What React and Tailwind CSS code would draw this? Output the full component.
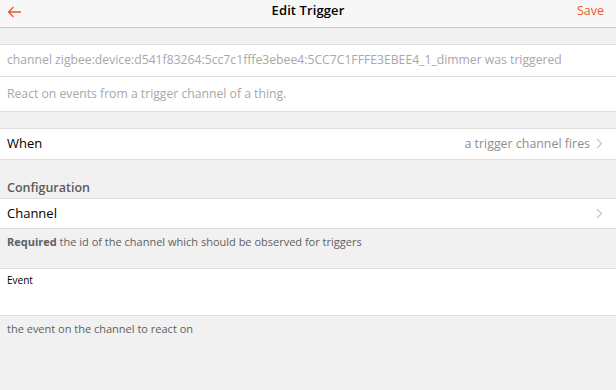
import React from "react";

const Chevron = () => (
  <svg width="7" height="11" viewBox="0 0 7 11" className="ml-[6px]">
    <path d="M1 1l4.5 4.5L1 10" fill="none" stroke="#c7c7cc" strokeWidth="1.2" />
  </svg>
);

export default function App() {
  return (
    <div
      className="w-[616px] h-[390px] bg-[#f1f1f1] overflow-hidden text-[#1f1f1f]"
      style={{ fontFamily: '"Open Sans", "Noto Sans", sans-serif' }}
    >
      <div className="h-[28px] bg-[#f7f7f7] border-b border-[#c6c6c6] grid grid-cols-[1fr_auto_1fr] items-center px-[7px]">
        <svg width="15" height="12" viewBox="0 0 15 12" className="-mt-[3px]">
          <path d="M14 6H1.5M6.5 1L1.5 6l5 5" fill="none" stroke="#ec5a2a" strokeWidth="1.3" />
        </svg>
        <div className="text-[13px] font-semibold text-black -mt-[5px] tracking-[0.1px]">Edit Trigger</div>
        <div className="text-[12.5px] text-[#ec5a2a] -mt-[5px] pr-[5px] text-right">Save</div>
      </div>
      <div className="h-[16px]" />
      <div className="bg-white border-y border-[#dddddd]">
        <div className="h-[32px] flex items-center px-[7px] text-[12.2px] text-[#a8a8a8] border-b border-[#dddddd] whitespace-nowrap">
          channel zigbee:device:d541f83264:5cc7c1fffe3ebee4:5CC7C1FFFE3EBEE4_1_dimmer was triggered
        </div>
        <div className="h-[34px] flex items-center px-[7px] text-[12.2px] text-[#a8a8a8]">
          React on events from a trigger channel of a thing.
        </div>
      </div>
      <div className="h-[16px]" />
      <div className="h-[32px] bg-white border-y border-[#dddddd] flex items-center justify-between px-[7px] pr-[13px]">
        <div className="text-[13px] text-black">When</div>
        <div className="flex items-center text-[12.4px] text-[#8e8e8e]">
          a trigger channel fires
          <Chevron />
        </div>
      </div>
      <div className="h-[38px] flex items-end px-[7px] pb-[0px]">
        <div className="text-[12.5px] font-semibold text-[#5a5a5a]">Configuration</div>
      </div>
      <div className="h-[31px] bg-white border-y border-[#dddddd] flex items-center justify-between px-[7px] pr-[13px]">
        <div className="text-[13px] text-black">Channel</div>
        <Chevron />
      </div>
      <div className="h-[39px] pt-[5px] px-[7px] text-[11px] text-[#5f5f5f]">
        <span className="font-bold">Required</span> the id of the channel which should be observed for triggers
      </div>
      <div className="h-[48px] bg-white border-y border-[#dddddd] px-[7px] pt-[4px]">
        <div className="text-[10px] text-black">Event</div>
      </div>
      <div className="pt-[5px] px-[7px] text-[11px] text-[#5f5f5f]">
        the event on the channel to react on
      </div>
    </div>
  );
}
